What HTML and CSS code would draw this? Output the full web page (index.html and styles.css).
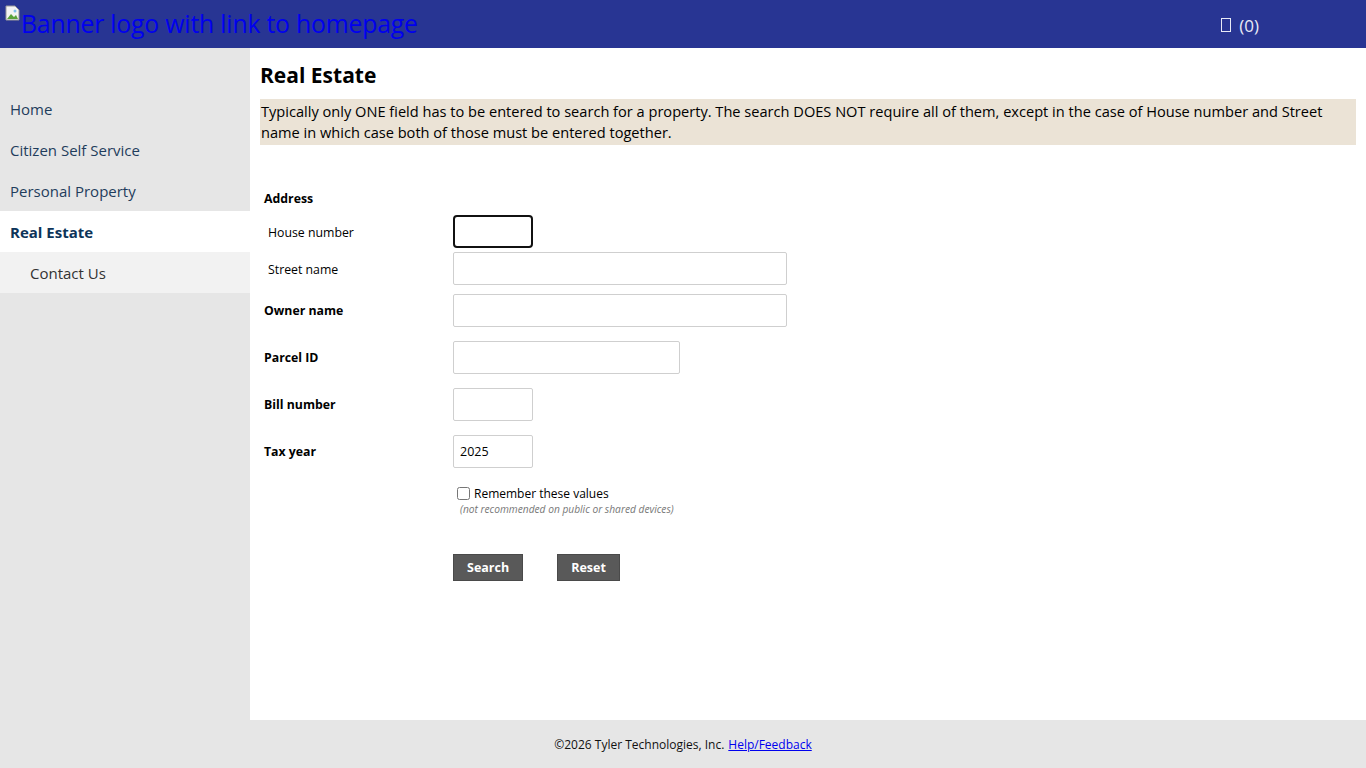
FILE: index.html
```html
<!DOCTYPE html>
<html lang="en">
<head>
<meta charset="utf-8">
<title>Real Estate</title>
<link rel="stylesheet" href="styles.css">
</head>
<body>
<header class="banner">
  <a class="logo" href="#">
    <svg class="broken" width="16" height="16" viewBox="0 0 16 16" aria-hidden="true">
      <path d="M1 1h9l4 4v10H1z" fill="#f4f4f4" stroke="#9a9a9a" stroke-width="1"/>
      <path d="M2 14l4-5 3 3 2-2 2 4z" fill="#5aa33a"/>
      <circle cx="10" cy="6" r="1.5" fill="#7fbfe8"/>
    </svg><span class="alt">Banner logo with link to homepage</span>
  </a>
  <div class="cart"><span class="cart-box"></span> (0)</div>
</header>
<div class="page">
  <nav class="sidebar">
    <a class="nav-item" href="#">Home</a>
    <a class="nav-item" href="#">Citizen Self Service</a>
    <a class="nav-item" href="#">Personal Property</a>
    <a class="nav-item active" href="#">Real Estate</a>
    <a class="nav-item sub" href="#">Contact Us</a>
  </nav>
  <main class="content">
    <h1 class="title">Real Estate</h1>
    <p class="info">Typically only ONE field has to be entered to search for a property. The search DOES NOT require all of them, except in the case of House number and Street name in which case both of those must be entered together.</p>
    <form class="form">
      <div class="row head"><span class="label bold">Address</span></div>
      <div class="row r-house"><label class="label indent">House number</label><input class="inp w80 focus" type="text"></div>
      <div class="row r-street"><label class="label indent">Street name</label><input class="inp w334" type="text"></div>
      <div class="row r-owner"><label class="label bold">Owner name</label><input class="inp w334" type="text"></div>
      <div class="row r-gap"><label class="label bold">Parcel ID</label><input class="inp w227" type="text"></div>
      <div class="row r-gap"><label class="label bold">Bill number</label><input class="inp w80" type="text"></div>
      <div class="row r-gap"><label class="label bold">Tax year</label><input class="inp w80" type="text" value="2025"></div>
      <div class="row r-check"><span class="label"></span>
        <div class="check-wrap">
          <label class="check"><input type="checkbox"> Remember these values</label>
          <div class="note">(not recommended on public or shared devices)</div>
        </div>
      </div>
      <div class="row r-btns"><span class="label"></span>
        <div class="btns"><button type="button" class="btn">Search</button><button type="button" class="btn">Reset</button></div>
      </div>
    </form>
  </main>
</div>
<footer class="footer">©2026 Tyler Technologies, Inc. <a href="#">Help/Feedback</a></footer>
</body>
</html>
```
FILE: styles.css
```css
* { box-sizing: border-box; }
html, body { margin: 0; padding: 0; height: 100%; }
body {
  font-family: "Open Sans", "Noto Sans", "Liberation Sans", sans-serif;
  color: #000;
  display: flex;
  flex-direction: column;
  min-height: 768px;
  background: #fff;
}
.banner {
  height: 48px;
  background: #283593;
  display: flex;
  align-items: flex-start;
  justify-content: space-between;
  flex: none;
}
.logo {
  display: flex;
  align-items: flex-start;
  padding: 5px 0 0 5px;
  text-decoration: none;
}
.broken { flex: none; }
.alt {
  color: #0000ee;
  font-size: 24.8px;
  line-height: 28px;
  margin-top: 4px;
  letter-spacing: -0.2px;
}
.cart {
  color: #e8eaf6;
  font-size: 17px;
  padding: 14px 107px 0 0;
  display: flex;
  align-items: center;
  height: 36px;
}
.cart-box {
  display: inline-block;
  width: 10px;
  height: 14px;
  border: 1px solid #e8eaf6;
  margin-right: 8px;
}
.page {
  flex: 1;
  display: flex;
}
.sidebar {
  width: 250px;
  flex: none;
  background: #e6e6e6;
  padding-top: 40px;
  display: flex;
  flex-direction: column;
}
.nav-item {
  height: 41px;
  display: flex;
  align-items: center;
  padding-left: 10px;
  color: #1f3d5c;
  font-size: 15px;
  text-decoration: none;
}
.nav-item.active {
  background: #fff;
  font-weight: bold;
  color: #0d3459;
}
.nav-item.sub {
  background: #f2f2f2;
  padding-left: 30px;
  color: #333;
}
.content {
  flex: 1;
  padding: 0 10px 0 10px;
}
.title {
  font-size: 21px;
  font-weight: bold;
  margin: 0;
  padding-top: 13px;
  line-height: 28px;
}
.info {
  background: #ebe3d6;
  margin: 10px 0 0 0;
  padding: 2px 20px 2px 1px;
  font-size: 14.6px;
  line-height: 21px;
}
.form {
  margin-top: 43px;
  padding-left: 4px;
}
.row {
  display: grid;
  grid-template-columns: 189px auto;
  align-items: center;
}
.head { height: 20px; }
.label { font-size: 12.3px; }
.label.bold { font-weight: bold; }
.label.indent { padding-left: 4px; padding-top: 1px; }
.r-house { margin-top: 7px; }
.r-street { margin-top: 4px; }
.r-owner { margin-top: 9px; }
.r-gap { margin-top: 14px; }
.inp {
  height: 33px;
  border: 1px solid #cfcfcf;
  border-radius: 2px;
  font-family: inherit;
  font-size: 12.5px;
  padding: 0 6px;
  background: #fff;
  color: #000;
}
.inp.focus { border: 2px solid #111; border-radius: 4px; }
.w80 { width: 80px; }
.w334 { width: 334px; }
.w227 { width: 227px; }
.r-check { margin-top: 16px; align-items: start; }
.check-wrap { padding-left: 4px; }
.check {
  font-size: 12px;
  display: flex;
  align-items: center;
  height: 18px;
}
.check input { margin: 0 4px 0 0; width: 13px; height: 13px; }
.note {
  font-size: 10.2px;
  font-style: italic;
  color: #777;
  padding-left: 3px;
  line-height: 14px;
}
.r-btns { margin-top: 38px; }
.btns { display: flex; gap: 34px; }
.btn {
  background: #595959;
  color: #fff;
  border: 1px solid #4a4a4a;
  font-family: inherit;
  font-weight: bold;
  font-size: 12.5px;
  height: 27px;
  padding: 0 13px;
  cursor: pointer;
}
.footer {
  height: 48px;
  flex: none;
  background: #e6e6e6;
  display: flex;
  align-items: center;
  justify-content: center;
  font-size: 12px;
  color: #111;
  gap: 4px;
}
.footer a { color: #0000ee; }
```
